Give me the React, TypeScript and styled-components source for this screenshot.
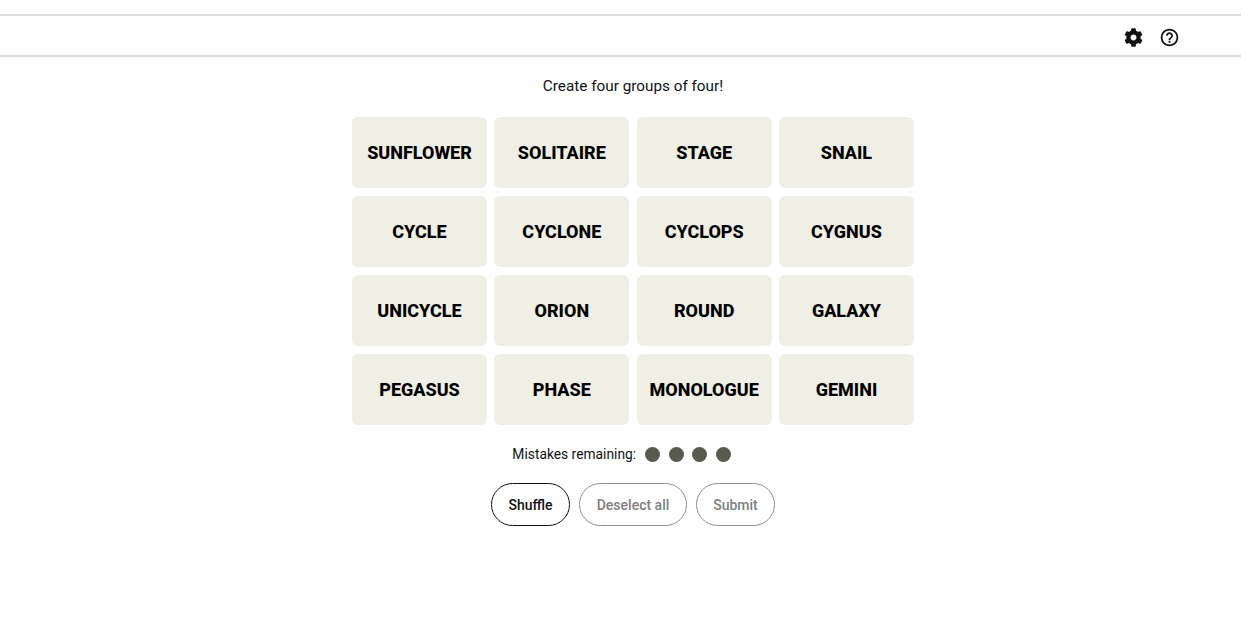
import React from "react";
import styled, { createGlobalStyle } from "styled-components";
import { FaCog } from "react-icons/fa";
import { MdOutlineHelpOutline } from "react-icons/md";

const WORDS = [
  "SUNFLOWER", "SOLITAIRE", "STAGE", "SNAIL",
  "CYCLE", "CYCLONE", "CYCLOPS", "CYGNUS",
  "UNICYCLE", "ORION", "ROUND", "GALAXY",
  "PEGASUS", "PHASE", "MONOLOGUE", "GEMINI"
];

const GlobalStyle = createGlobalStyle`
  html, body {
    margin: 0;
    padding: 0;
    background: #fff;
    color: #000;
    font-family: Roboto, Arial, sans-serif;
    overflow: hidden;
  }
`;

const Page = styled.div`
  width: 1241px;
  height: 620px;
  padding-top: 14px;
  box-sizing: border-box;
`;

const Toolbar = styled.header`
  height: 43px;
  box-sizing: border-box;
  border-top: 2px solid #dcdcdc;
  border-bottom: 2px solid #dcdcdc;
  display: flex;
  align-items: center;
  justify-content: flex-end;
  gap: 15px;
  padding: 3px 61px 0 0;
`;

const IconButton = styled.span`
  display: flex;
  width: 21px;
  height: 21px;
  align-items: center;
  justify-content: center;
  color: #121212;
`;

const Main = styled.main`
  display: flex;
  flex-direction: column;
  align-items: center;
  padding-left: 25px;
`;

const Prompt = styled.p`
  margin: 20px 0 0;
  font-family: Roboto, sans-serif;
  font-size: 15.3px;
  line-height: 19px;
  color: #121212;
`;

const Board = styled.div`
  margin-top: 20.75px;
  display: grid;
  grid-template-columns: repeat(4, 135px);
  grid-auto-rows: 71.5px;
  gap: 7.5px 7.33px;
`;

const Tile = styled.div`
  background: #efefe6;
  border-radius: 6px;
  display: flex;
  align-items: center;
  justify-content: center;
  padding-bottom: 1px;
  box-sizing: border-box;
  font-family: Roboto, sans-serif;
  font-weight: 800;
  font-size: 18px;
  color: #000;
`;

const Mistakes = styled.div`
  margin-top: 19.75px;
  height: 18px;
  display: flex;
  align-items: center;
  font-family: Roboto, sans-serif;
  font-size: 13.8px;
  color: #121212;
`;

const Dots = styled.span`
  display: flex;
  gap: 8.5px;
  margin: 0 23px 0 9px;
`;

const Dot = styled.span`
  width: 15px;
  height: 15px;
  border-radius: 50%;
  background: #5a594e;
`;

const Actions = styled.div`
  margin-top: 20px;
  display: flex;
  gap: 9px;
`;

const Pill = styled.button<{ $active?: boolean; $w: number }>`
  width: ${p => p.$w}px;
  height: 43px;
  padding: 0;
  border-radius: 22px;
  background: #fff;
  border: 1px solid ${p => (p.$active ? "#121212" : "#8f8f8f")};
  color: ${p => (p.$active ? "#121212" : "#7f7f7f")};
  font-family: Roboto, sans-serif;
  font-weight: 500;
  font-size: 14px;
`;

export default function App() {
  return (
    <Page>
      <GlobalStyle />
      <Toolbar>
        <IconButton><FaCog size={19} /></IconButton>
        <IconButton><MdOutlineHelpOutline size={23} /></IconButton>
      </Toolbar>
      <Main>
        <Prompt>Create four groups of four!</Prompt>
        <Board>
          {WORDS.map(word => <Tile key={word}>{word}</Tile>)}
        </Board>
        <Mistakes>
          Mistakes remaining:
          <Dots>{[0, 1, 2, 3].map(i => <Dot key={i} />)}</Dots>
        </Mistakes>
        <Actions>
          <Pill $active $w={79}>Shuffle</Pill>
          <Pill $w={108}>Deselect all</Pill>
          <Pill $w={79}>Submit</Pill>
        </Actions>
      </Main>
    </Page>
  );
}
